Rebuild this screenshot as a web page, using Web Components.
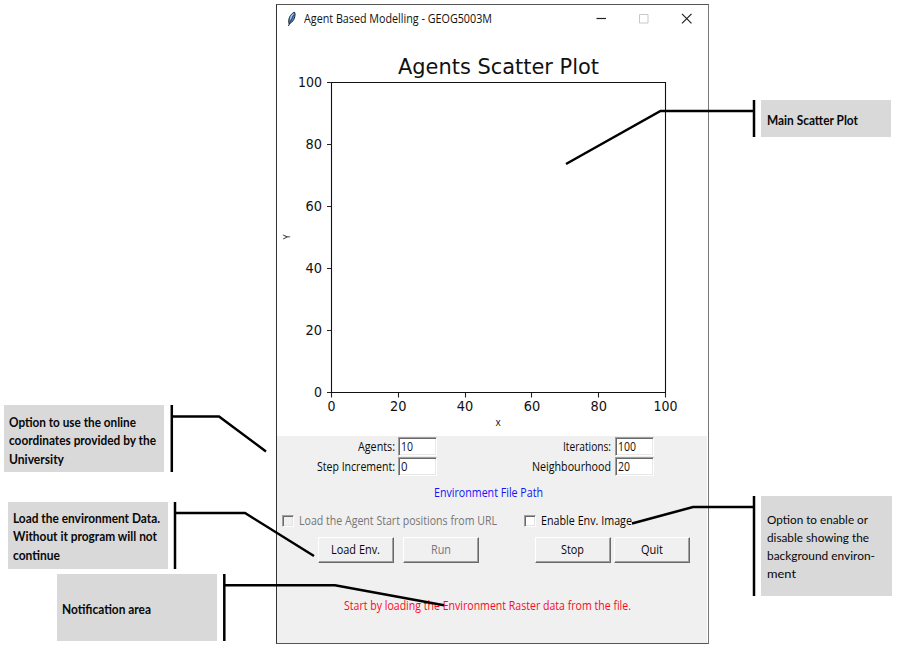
<!DOCTYPE html>
<html lang="en"><head><meta charset="utf-8"><title>Agent Based Modelling</title>
<style>html,body{margin:0;background:#fff;overflow:hidden}</style></head>
<body><annotated-app></annotated-app>
<script>
const define=(name,html,after)=>customElements.define(name,class extends HTMLElement{
  connectedCallback(){
    if(this.shadowRoot)return;
    this.attachShadow({mode:'open'}).innerHTML=html;
    if(after)after(this,this.shadowRoot);
  }
});

/* A single line of text condensed or widened to a given width in pixels. */
define('fit-text',`<style>:host{display:inline-block;white-space:pre}span{display:inline-block;transform-origin:0 50%}</style><span><slot></slot></span>`,
(el,root)=>{
  const s=root.querySelector('span'),w=+el.getAttribute('w');
  const k=w/s.getBoundingClientRect().width;
  el.style.width=w+'px';
  s.style.transform='scaleX('+k+')';
});

define('tk-entry',`<style>:host{display:flex;align-items:center;box-sizing:border-box;width:39px;height:19px;background:#fff;border:1px solid;border-color:#a0a0a0 #fff #fff #a0a0a0;box-shadow:inset 1px 1px #696969,inset -1px -1px #e8e8e8;padding:0 0 0 2px;color:#111}</style><slot></slot>`);

define('tk-button',`<style>:host{display:flex;align-items:center;justify-content:center;box-sizing:border-box;width:76px;height:26px;background:#f0f0f0;border:1px solid;border-color:#fff #696969 #696969 #fff;box-shadow:inset -1px -1px #a0a0a0;padding-right:1px}:host([disabled]){color:#767676}</style><slot></slot>`);

define('tk-check',`<style>:host{display:flex;align-items:center;height:17px}i{box-sizing:border-box;width:12px;height:12px;background:#fff;border:1px solid;border-color:#a0a0a0 #fff #fff #a0a0a0;box-shadow:inset 1px 1px #696969,inset -1px -1px #e3e3e3;margin-right:5px}:host([disabled]){color:#767676}:host([disabled]) i{background:#f0f0f0}slot{display:block;padding-top:1px}</style><i></i><slot></slot>`);

define('title-bar',`<style>:host{display:flex;align-items:center;box-sizing:border-box;height:28px;padding:0 16px 1px 9px;color:#111}
.f{margin-right:5px}.b{display:flex;gap:32px}svg{display:block}.t{flex:1;padding:1px 0 0 1px}</style>
<svg class="f" width="12" height="16" viewBox="0 0 12 16"><path d="M3.6 12 2.5 15M3.2 13C1.6 9 4 2.8 8.6 1.2 10 4.6 8 10 4.2 12.3Z" fill="#4685c8" stroke="#1c2733" stroke-width="1"/><path d="M3.6 12.5 7.6 4" stroke="#172431" stroke-width=".6"/><path d="M4.2 8.3C4.8 5.8 5.8 4 7.4 2.7" stroke="#a8cdf0" stroke-width="1.1" fill="none"/></svg>
<div class="t"><slot></slot></div>
<div class="b"><svg width="11" height="11"><path d="M1.5 5.5H11" stroke="#222" stroke-width="1.2"/></svg>
<svg width="11" height="11"><path d="M1.5 1.5h8.5v8.5h-8.5z" fill="none" stroke="#c8c8c8"/></svg>
<svg width="11" height="11"><path d="M1 .8 10.5 10.3M10.5.8 1 10.3" stroke="#222" stroke-width="1.2"/></svg></div>`);

define('scatter-plot',`<style>:host{display:block;height:403px;background:#fff}svg{display:block}text{font-family:"DejaVu Sans",sans-serif;font-size:13.3px;fill:#111}.a{font-family:"Open Sans",sans-serif;font-size:10px}</style><svg width="431" height="403" viewBox="277 33 431 403"></svg>`,
(el,root)=>{
  const width=v=>v===100?24:v===0?8:16.5;
  let m=`<text x="398" y="74" style="font-size:22px" textLength="201" lengthAdjust="spacingAndGlyphs">Agents Scatter Plot</text><path d="M331.5 82.5H665.5V392.5H331.5Z" fill="none" stroke="#111" stroke-width="1.1"/>`;
  for(let i=0;i<6;i++){
    const v=i*20,w=width(v),x=331.5+i*66.8,y=Math.round(392-i*62)+.5;
    const fit=`textLength="${w}" lengthAdjust="spacingAndGlyphs"`;
    m+=`<path d="M${Math.floor(x)+.5} 393v4.5M327 ${y}h4.5" stroke="#222" stroke-width="1.1"/><text x="${x-w/2}" y="411.3" ${fit}>${v}</text><text x="${322-w}" y="${y+4.6}" ${fit}>${v}</text>`;
  }
  m+=`<text class="a" x="498" y="426" text-anchor="middle">x</text><text class="a" transform="translate(289.5 237) rotate(-90)" text-anchor="middle" style="font-size:9px">Y</text>`;
  root.querySelector('svg').innerHTML=m;
});

define('control-panel',`<style>
:host{display:flex;flex-direction:column;box-sizing:border-box;height:207px;margin-right:1px;background:#f0f0f0;padding-top:1px}
.grid{display:grid;grid-template-columns:118px 39px 171px 39px;row-gap:1px;column-gap:3px;align-items:center;justify-items:end}
.grid>:nth-child(4n){justify-self:start;margin-left:1px}
.path{height:18px;line-height:18px;text-align:center;margin-top:8px;padding-right:8px;color:#1414f8}
.checks{display:flex;margin:10px 0 0 5px;gap:27px}
.buttons{display:flex;margin:8px 0 0 41px;gap:9px}.buttons :nth-child(3){margin-left:47px}.buttons :nth-child(4){margin-left:-6px}
.msg{text-align:center;color:#fb0a1c;margin-top:34px;line-height:18px;padding-right:9px}
</style>
<div class="grid"><fit-text w="37">Agents:</fit-text><tk-entry><fit-text w="12">10</fit-text></tk-entry><fit-text w="48">Iterations:</fit-text><tk-entry><fit-text w="18">100</fit-text></tk-entry>
<fit-text w="78">Step Increment:</fit-text><tk-entry><fit-text w="6.5">0</fit-text></tk-entry><fit-text w="79">Neighbourhood</fit-text><tk-entry><fit-text w="12">20</fit-text></tk-entry></div>
<div class="path"><fit-text w="109">Environment File Path</fit-text></div>
<div class="checks"><tk-check disabled><fit-text w="198">Load the Agent Start positions from URL</fit-text></tk-check><tk-check><fit-text w="91">Enable Env. Image</fit-text></tk-check></div>
<div class="buttons"><tk-button><fit-text w="49">Load Env.</fit-text></tk-button><tk-button disabled><fit-text w="20">Run</fit-text></tk-button><tk-button><fit-text w="23">Stop</fit-text></tk-button><tk-button><fit-text w="22">Quit</fit-text></tk-button></div>
<div class="msg"><fit-text w="287">Start by loading the Environment Raster data from the file.</fit-text></div>`);

define('app-window',`<style>:host{display:block;box-sizing:border-box;width:433px;height:640px;border:1px solid #333;border-right-color:#777;border-top-color:#555;border-bottom:1.5px solid #555;background:#fff;font:12px/16px "Open Sans",sans-serif;color:#080808}</style>
<title-bar><fit-text w="188">Agent Based Modelling - GEOG5003M</fit-text></title-bar><scatter-plot></scatter-plot><control-panel></control-panel>`);

define('call-out',`<style>:host{display:flex;flex-direction:column;justify-content:center;align-items:flex-start;box-sizing:border-box;background:#d9d9d9;color:#080808;font:bold 12.3px/18.4px Lato,sans-serif;padding-left:5px}:host([plain]){font-weight:400;line-height:18px}</style><slot></slot>`);

define('annotated-app',`<style>
:host{display:block;position:relative;width:897px;height:647px;background:#fff}
app-window,call-out,.lines{position:absolute}
.lines{left:0;top:0}
</style>
<app-window style="left:276px;top:4px"></app-window>
<call-out style="left:761px;top:100px;width:130px;height:37px;padding:5px 0 0 6px"><fit-text w="91">Main Scatter Plot</fit-text></call-out>
<call-out style="left:4px;top:405px;width:160px;height:67px;padding-top:6px"><fit-text w="127">Option to use the online</fit-text><fit-text w="147">coordinates provided by the</fit-text><fit-text w="55">University</fit-text></call-out>
<call-out style="left:7.5px;top:502px;width:160px;height:67px;padding-top:4px"><fit-text w="147">Load the environment Data.</fit-text><fit-text w="144">Without it program will not</fit-text><fit-text w="47">continue</fit-text></call-out>
<call-out style="left:57px;top:574px;width:160px;height:67px;padding-top:5px"><fit-text w="89">Notification area</fit-text></call-out>
<call-out plain style="left:761px;top:496px;width:131px;height:100px;padding:2px 0 0 6px"><fit-text w="101">Option to enable or</fit-text><fit-text w="102">disable showing the</fit-text><fit-text w="108">background environ-</fit-text><fit-text w="29">ment</fit-text></call-out>
<svg class="lines" width="897" height="647" fill="none" stroke="#000" stroke-width="2.5">
<path d="M754 100V137M754 111H660.5L566 164"/>
<path d="M171.8 405V472M172 416.5H219L266 451.5"/>
<path d="M175 502V569M175 513H245L314 556"/>
<path d="M224.3 574V641M224 585.3H335L444 605.3"/>
<path d="M754 496V596M754 507H693L632 523.5"/>
</svg>`);
</script></body></html>
